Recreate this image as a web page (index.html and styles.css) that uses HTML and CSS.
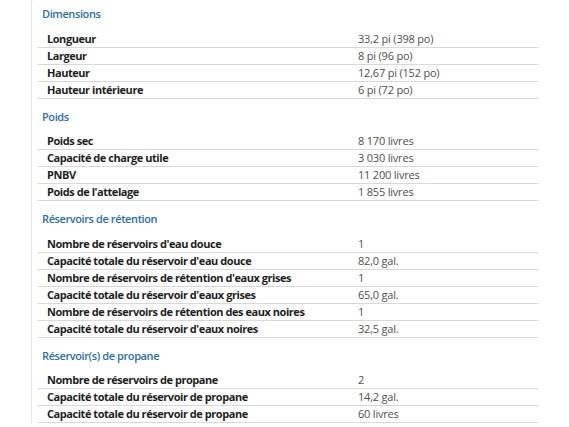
FILE: index.html
```html
<!DOCTYPE html>
<html lang="fr">
<head>
<meta charset="utf-8">
<link rel="stylesheet" href="styles.css">
</head>
<body>
<div class="panel">
  <section class="group first">
    <h3 class="group-title">Dimensions</h3>
    <div class="row"><span class="label">Longueur</span><span class="value">33,2 pi (398 po)</span></div>
    <div class="row"><span class="label">Largeur</span><span class="value">8 pi (96 po)</span></div>
    <div class="row"><span class="label">Hauteur</span><span class="value">12,67 pi (152 po)</span></div>
    <div class="row"><span class="label">Hauteur intérieure</span><span class="value">6 pi (72 po)</span></div>
  </section>
  <section class="group">
    <h3 class="group-title">Poids</h3>
    <div class="row"><span class="label">Poids sec</span><span class="value">8 170 livres</span></div>
    <div class="row"><span class="label">Capacité de charge utile</span><span class="value">3 030 livres</span></div>
    <div class="row"><span class="label">PNBV</span><span class="value">11 200 livres</span></div>
    <div class="row"><span class="label">Poids de l'attelage</span><span class="value">1 855 livres</span></div>
  </section>
  <section class="group">
    <h3 class="group-title">Réservoirs de rétention</h3>
    <div class="row"><span class="label">Nombre de réservoirs d'eau douce</span><span class="value">1</span></div>
    <div class="row"><span class="label">Capacité totale du réservoir d'eau douce</span><span class="value">82,0 gal.</span></div>
    <div class="row"><span class="label">Nombre de réservoirs de rétention d'eaux grises</span><span class="value">1</span></div>
    <div class="row"><span class="label">Capacité totale du réservoir d'eaux grises</span><span class="value">65,0 gal.</span></div>
    <div class="row"><span class="label">Nombre de réservoirs de rétention des eaux noires</span><span class="value">1</span></div>
    <div class="row"><span class="label">Capacité totale du réservoir d'eaux noires</span><span class="value">32,5 gal.</span></div>
  </section>
  <section class="group">
    <h3 class="group-title">Réservoir(s) de propane</h3>
    <div class="row"><span class="label">Nombre de réservoirs de propane</span><span class="value">2</span></div>
    <div class="row"><span class="label">Capacité totale du réservoir de propane</span><span class="value">14,2 gal.</span></div>
    <div class="row"><span class="label">Capacité totale du réservoir de propane</span><span class="value">60 livres</span></div>
  </section>
</div>
</body>
</html>
```
FILE: styles.css
```css
html, body {
  margin: 0;
  padding: 0;
  background: #ffffff;
}
body {
  font-family: "Open Sans", "Liberation Sans", sans-serif;
  font-size: 11px;
  color: #222;
}
.panel {
  margin-left: 31px;
  border-left: 1px solid #e8e8e8;
  padding-left: 6px;
  width: 500px;
  min-height: 427px;
}
.group-title {
  margin: 0;
  padding: 10px 0 8.5px 4px;
  line-height: 16px;
  font-size: 11px;
  font-weight: 600;
  letter-spacing: -0.4px;
  color: #2f6ea5;
}
.group.first {
  margin-top: -4px;
}
.row {
  display: grid;
  grid-template-columns: 320px 1fr;
  height: 16px;
  line-height: 16px;
  border-bottom: 1px solid #d9d9d9;
}
.label {
  padding-left: 9px;
  font-weight: 700;
  letter-spacing: -0.45px;
  color: #1e1e1e;
  white-space: nowrap;
}
.value {
  color: #505050;
  letter-spacing: -0.2px;
  white-space: nowrap;
}
```
